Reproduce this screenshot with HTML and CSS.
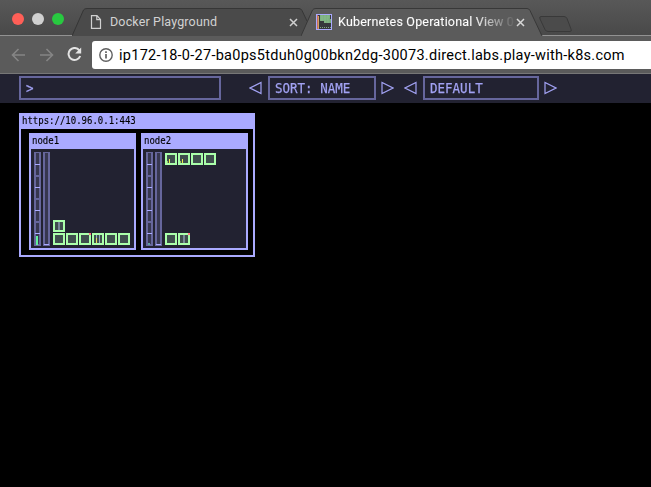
FILE: index.html
```html
<!DOCTYPE html>
<html lang="en">
<head>
<meta charset="utf-8">
<title>Kubernetes Operational View</title>
<link rel="stylesheet" href="styles.css">
</head>
<body>
<header class="tabstrip">
  <div class="lights"><i class="light red"></i><i class="light grey"></i><i class="light green"></i></div>
  <div class="tab tab-idle">
    <svg class="tab-shape" width="236" height="29" viewBox="0 0 236 29"><path d="M0 28 L11.500 2 Q12.500 .5 15 .5 H227 Q229 .5 230 2.500 L236 16 V28Z" fill="#4a4a4a"/><path d="M0 28 L11.500 2 Q12.500 .5 15 .5 H227 Q229 .5 230 2.500 L235 13" fill="none" stroke="#363636"/></svg>
    <svg class="page-icon" width="12" height="14" viewBox="0 0 12 14"><path d="M1.500 .7H7L10.500 4.500V13.300H1.500Z M6.800 .7V4.700H10.500" fill="none" stroke="#d0d0d0" stroke-width="1.200"/></svg>
    <span class="tab-title">Docker Playground</span>
    <svg class="close" width="9" height="9" viewBox="0 0 9 9"><path d="M1 1L8 8M8 1L1 8" stroke="#d0d0d0" stroke-width="1.500"/></svg>
  </div>
  <div class="tab tab-active">
    <svg class="tab-shape" width="242" height="29" viewBox="0 0 242 29"><path d="M0 29 V28 L11.500 2 Q12.500 .5 15 .5 H226 Q228 .5 229 2.500 L241 28 V29Z" fill="#5b5b5b"/><path d="M0 28 L11.500 2 Q12.500 .5 15 .5 H226 Q228 .5 229 2.500 L241 28" fill="none" stroke="#383838"/></svg>
    <svg class="favicon" width="16" height="16" viewBox="0 0 16 16"><path d="M0 0H16V16H0Z" fill="#aaaaff"/><path d="M1 1H15V15H1Z" fill="#35383c"/><path d="M1 1H2V15H1Z" fill="#c76d60"/><path d="M2 2H3V15H2Z" fill="#d0a062"/><path d="M4 1H14V5H15V9H8V7H4Z" fill="#79ad7d"/><path d="M4 3H14M4 5H12M6 1V7M9 1V9M12 1V9" stroke="#91c795" stroke-width=".5"/><path d="M4 13.500H15" stroke="#83a98a" stroke-dasharray="1 1"/></svg>
    <span class="tab-title active-title">Kubernetes Operational View 0</span>
    <svg class="close" width="9" height="9" viewBox="0 0 9 9"><path d="M1 1L8 8M8 1L1 8" stroke="#d8d8d8" stroke-width="1.500"/></svg>
  </div>
  <svg class="new-tab" width="34" height="17" viewBox="0 0 34 17"><path d="M2 .5H25Q27 .5 28 2.500L32 13Q33 15.500 31 15.500H9Q7 15.500 6 13.500L1 3Q0 .5 2 .5Z" fill="#4b4b4b" stroke="#393939"/></svg>
</header>
<nav class="navbar">
  <svg class="arrow" width="15" height="14" viewBox="0 0 15 14"><path d="M14 7H1.500M7.500 1L1.500 7L7.500 13" fill="none" stroke="#858585" stroke-width="1.600"/></svg>
  <svg class="arrow forward" width="15" height="14" viewBox="0 0 15 14"><path d="M1 7H13.500M7.500 1L13.500 7L7.500 13" fill="none" stroke="#858585" stroke-width="1.600"/></svg>
  <svg class="reload" width="15" height="15" viewBox="0 0 15 15"><path d="M12.300 3.300A6 6 0 1 0 13.200 9" fill="none" stroke="#e4e4e4" stroke-width="2"/><path d="M14.200 .5V6.500H8.200Z" fill="#e4e4e4"/></svg>
  <div class="address">
    <svg width="14" height="14" viewBox="0 0 14 14"><circle cx="7" cy="7" r="6.200" fill="none" stroke="#606060" stroke-width="1.400"/><path d="M7 6V10.500M7 3.300V4.900" stroke="#606060" stroke-width="1.700"/></svg>
    <span class="url">ip172-18-0-27-ba0ps5tduh0g00bkn2dg-30073.direct.labs.play-with-k8s.com</span>
  </div>
</nav>
<section class="toolbar">
  <div class="box search"><span class="mono">&gt;</span></div>
  <svg class="tri" width="13" height="14" viewBox="0 0 13 14"><path d="M12 1.500V12.500L1 7Z"/></svg>
  <div class="box sort"><span class="mono">SORT: NAME</span></div>
  <svg class="tri" width="13" height="14" viewBox="0 0 13 14"><path d="M1 1.500V12.500L12 7Z"/></svg>
  <svg class="tri second" width="13" height="14" viewBox="0 0 13 14"><path d="M12 1.500V12.500L1 7Z"/></svg>
  <div class="box theme"><span class="mono">DEFAULT</span></div>
  <svg class="tri" width="13" height="14" viewBox="0 0 13 14"><path d="M1 1.500V12.500L12 7Z"/></svg>
</section>
<main class="cluster">
  <h1><span class="mono">https://10.96.0.1:443</span></h1>
  <div class="nodes">
    <section class="node">
      <h2><span class="mono">node1</span></h2>
      <div class="node-body">
        <div class="meter cpu"><i class="usage high"></i></div>
        <div class="meter mem"></div>
        <div class="pods">
          <div class="pod-row system"><i class="pod bar"></i></div>
          <div class="pod-row"><i class="pod"></i><i class="pod"></i><i class="pod alert"></i><i class="pod multi"></i><i class="pod"></i><i class="pod"></i></div>
        </div>
      </div>
    </section>
    <section class="node">
      <h2><span class="mono">node2</span></h2>
      <div class="node-body">
        <div class="meter cpu"><i class="usage low"></i></div>
        <div class="meter mem"></div>
        <div class="pods spread">
          <div class="pod-row"><i class="pod spark"></i><i class="pod spark"></i><i class="pod"></i><i class="pod"></i></div>
          <div class="pod-row"><i class="pod"></i><i class="pod bar alert"></i></div>
        </div>
      </div>
    </section>
  </div>
</main>
</body>
</html>
```
FILE: styles.css
```css
* { box-sizing: border-box; }
body { margin: 0; width: 651px; height: 487px; overflow: hidden; background: #000; font-family: Roboto, "Liberation Sans", sans-serif; }
svg { display: block; flex: none; }
.tabstrip { display: flex; height: 36px; background: linear-gradient(#585858, #494949); border-bottom: 1px solid #929292; }
.lights { display: flex; gap: 8px; width: 72px; padding: 13px 0 0 12px; flex: none; }
.light { width: 12px; height: 12px; border-radius: 50%; flex: none; }
.red { background: #ff5f57; }
.grey { background: #d0d0d0; }
.green { background: #28c940; }
.tab { position: relative; display: flex; align-items: center; height: 28px; margin-top: 8px; flex: none; }
.tab > * { position: relative; }
.tab > .tab-shape { position: absolute; left: 0; top: 0; }
.tab-idle { width: 229px; padding-left: 18px; }
.tab-active { width: 238px; padding-left: 15px; }
.tab-title { width: 179px; margin-left: 8px; color: #d2d2d2; font-size: 12.500px; letter-spacing: .15px; line-height: 20px; white-space: nowrap; overflow: hidden; }
.active-title { width: 177px; margin-left: 6px; letter-spacing: .19px; color: transparent; background: linear-gradient(90deg, #fff 135px, #686868 175px); background-clip: text; -webkit-background-clip: text; -webkit-text-stroke: .2px transparent; }
.tab-active .close { margin-left: 1px; }
.new-tab { margin-top: 16px; }
.navbar { display: flex; align-items: center; height: 38px; padding-left: 11px; background: #5b5b5b; border-bottom: 1px solid #777; }
.forward { margin-left: 13px; }
.reload { margin-left: 13px; }
.address { display: flex; align-items: center; flex: 1; height: 28px; margin-left: 10px; padding-left: 7px; background: #fff; border-radius: 3px 0 0 3px; }
.url { margin-left: 6px; padding-top: 1px; color: #000; font-size: 14.500px; letter-spacing: .27px; white-space: nowrap; }
.mono { font-family: "DejaVu Sans Mono", monospace; white-space: pre; display: block; width: max-content; transform: scaleX(.9); transform-origin: 0 50%; }
.toolbar { display: flex; align-items: center; height: 29px; padding: 0 0 1px 19px; background: #222231; }
.box { display: flex; align-items: center; height: 24px; padding-left: 5px; border: 2px solid #66669c; color: #a2a2f3; line-height: 20px; flex: none; }
.box .mono { font-size: 13.900px; -webkit-text-stroke: .25px #a2a2f3; }
.search { width: 202px; margin-right: 28px; }
.sort { width: 108px; margin: 0 5px 0 6px; }
.theme { width: 116px; margin: 0 5px 0 6px; }
.tri { fill: none; stroke: #a2a2f3; stroke-width: 1.200; }
.second { margin-left: 10px; }
.cluster { width: 236px; height: 144px; margin: 10px 0 0 19px; border: 2px solid #aaaaff; }
h1, h2 { margin: 0; padding-left: 1px; height: 14px; background: #aaaaff; color: #000; font-size: 10px; font-weight: 400; line-height: 12px; -webkit-text-stroke: .15px #000; }
.nodes { display: flex; gap: 5px; padding: 4px 0 0 8px; }
.node { width: 107px; height: 117px; border: 2px solid #aaaaff; background: #222231; }
.node-body { display: flex; height: 99px; padding: 3px 0 2px 3px; }
.meter { position: relative; width: 7px; height: 94px; margin-right: 2px; background: #37374f; border: 2px solid #66669c; border-top-width: 1px; flex: none; }
.cpu::before { content: ""; position: absolute; inset: 11px -1px 0; background: repeating-linear-gradient(#aaaaff 0 1px, transparent 1px 11px, #66669c 11px 13px, transparent 13px 23px); }
.mem::after { content: ""; position: absolute; left: -1px; right: -1px; bottom: -1px; height: 1px; background: #aaaaff; }
.usage { position: absolute; left: 0; bottom: -1px; width: 2px; background: #62f29b; }
.high { height: 9px; }
.low { height: 2px; background: #5da29d; }
.pods { display: flex; flex-direction: column; justify-content: flex-end; gap: 1px; height: 93px; margin-left: 1px; }
.spread { justify-content: space-between; height: 92px; margin-top: 1px; }
.pod-row { display: flex; gap: 1px; }
.pod { position: relative; width: 12px; height: 12px; border: 2px solid #aaffaa; background: #3f4e4d; }
.pod::before, .alert::after { content: ""; position: absolute; }
.bar::before { left: 3px; top: 0; width: 2px; height: 8px; background: #778797; }
.alert::after { right: -2px; top: -2px; width: 2px; height: 2px; background: #ff7584; }
.multi::before { inset: 0; background: linear-gradient(#e9dc5a, #e9dc5a) 2px 3px / 1px 5px no-repeat, linear-gradient(#91abc8, #91abc8) 2px 0 / 1px 8px no-repeat, linear-gradient(#91abc8, #91abc8) 5px 0 / 1px 8px no-repeat; }
.spark::before { inset: 0; background: linear-gradient(#e9f04f, #e9f04f) 2px 4px / 1px 4px no-repeat, linear-gradient(#a6c857, #a6c857) 0 6px / 1px 2px no-repeat; }
```
